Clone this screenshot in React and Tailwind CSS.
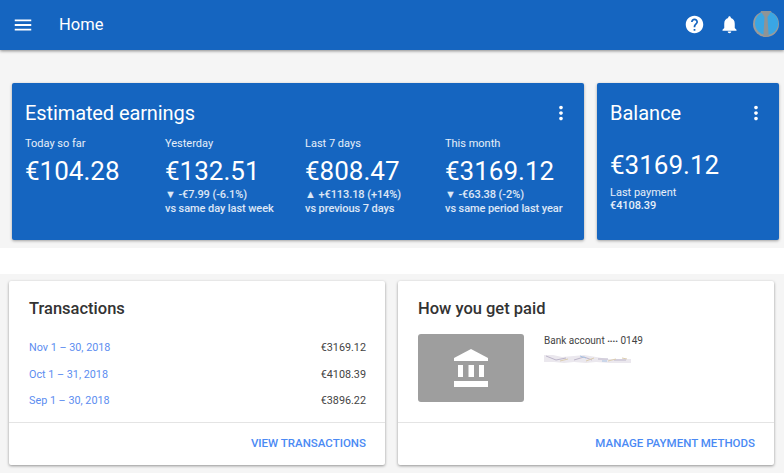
const stats = [
  { label: "Today so far", value: "€104.28" },
  { label: "Yesterday", value: "€132.51", change: "▼ -€7.99 (-6.1%)", note: "vs same day last week" },
  { label: "Last 7 days", value: "€808.47", change: "▲ +€113.18 (+14%)", note: "vs previous 7 days" },
  { label: "This month", value: "€3169.12", change: "▼ -€63.38 (-2%)", note: "vs same period last year" },
];

const transactions = [
  { period: "Nov 1 – 30, 2018", amount: "€3169.12" },
  { period: "Oct 1 – 31, 2018", amount: "€4108.39" },
  { period: "Sep 1 – 30, 2018", amount: "€3896.22" },
];

function MenuIcon() {
  return (
    <svg width="22" height="22" viewBox="0 0 24 24" fill="#fff">
      <path d="M3 18h18v-2H3v2zm0-5h18v-2H3v2zm0-7v2h18V6H3z" />
    </svg>
  );
}

function HelpIcon() {
  return (
    <svg width="21" height="21" viewBox="0 0 24 24" fill="#fff">
      <path d="M12 2C6.48 2 2 6.48 2 12s4.48 10 10 10 10-4.48 10-10S17.52 2 12 2zm1 17h-2v-2h2v2zm2.07-7.75l-.9.92C13.45 12.9 13 13.5 13 15h-2v-.5c0-1.1.45-2.1 1.17-2.83l1.24-1.26c.37-.36.59-.86.59-1.41 0-1.1-.9-2-2-2s-2 .9-2 2H8c0-2.21 1.79-4 4-4s4 1.79 4 4c0 .88-.36 1.68-.93 2.25z" />
    </svg>
  );
}

function BellIcon() {
  return (
    <svg width="21" height="21" viewBox="0 0 24 24" fill="#fff">
      <path d="M12 22c1.1 0 2-.9 2-2h-4c0 1.1.89 2 2 2zm6-6v-5c0-3.07-1.64-5.64-4.5-6.32V4c0-.83-.67-1.5-1.5-1.5s-1.5.67-1.5 1.5v.68C7.63 5.36 6 7.92 6 11v5l-2 2v1h16v-1l-2-2z" />
    </svg>
  );
}

function MoreIcon() {
  return (
    <svg width="22" height="22" viewBox="0 0 24 24" fill="#fff">
      <path d="M12 8c1.1 0 2-.9 2-2s-.9-2-2-2-2 .9-2 2 .9 2 2 2zm0 2c-1.1 0-2 .9-2 2s.9 2 2 2 2-.9 2-2-.9-2-2-2zm0 6c-1.1 0-2 .9-2 2s.9 2 2 2 2-.9 2-2-.9-2-2-2z" />
    </svg>
  );
}

function Avatar() {
  return (
    <svg width="26" height="26" viewBox="0 0 26 26">
      <circle cx="13" cy="13" r="13" fill="#9a9a9a" />
      <circle cx="13.6" cy="12.2" r="11.6" fill="#3aa6e4" />
      <path d="M7.5 0h11l-4 6 1.2 19.5h-5.4L11.5 6z" fill="#8f9496" />
    </svg>
  );
}

function BankIcon() {
  return (
    <svg width="34" height="38" viewBox="0 0 34 38" fill="#fff">
      <path d="M17 0L0 9v3h34V9z" />
      <rect x="4" y="16" width="5" height="12" />
      <rect x="14.5" y="16" width="5.5" height="12" />
      <rect x="25" y="16" width="5" height="12" />
      <rect x="0" y="32" width="34" height="6" />
    </svg>
  );
}

function Smear() {
  return (
    <svg width="87" height="10" viewBox="0 0 87 10" className="mt-[5px]">
      <path d="M0 1h9l9 2 12-1 10-1 12 2 12 2 23 0v4H66l-14-1-10 1-12-1-10 1-10-1H0z" fill="#ebe8ee" />
      <path d="M2 2l10 4 10-2M30 6l10-3 8 3M54 5h10M70 6h12" stroke="#bdb6ca" strokeWidth="1" fill="none" />
      <path d="M16 7l8-2M42 7l8-3M64 7l8-2M78 4l5 1" stroke="#dccdb0" strokeWidth="1" fill="none" />
      <path d="M36 2l6 2M58 7h5" stroke="#a9c4e4" strokeWidth="1" fill="none" />
    </svg>
  );
}

function EarningsCard() {
  return (
    <div className="w-[572px] h-[157px] rounded-[2px] bg-[#1565c0] text-white pl-[13px] pt-[17px] shadow-[0_1px_3px_rgba(0,0,0,0.35)]">
      <div className="flex items-center justify-between pr-[12px] h-[26px]">
        <h2 className="text-[20px] leading-[26px] tracking-[-0.1px]">Estimated earnings</h2>
        <MoreIcon />
      </div>
      <div className="flex mt-[10px]">
        {stats.map((s) => (
          <div key={s.label} className="w-[140px] shrink-0">
            <div className="text-[11px] leading-[16px] text-white/90">{s.label}</div>
            <div className="text-[26px] leading-[36px] mt-[1px]">{s.value}</div>
            {s.change && (
              <div className="text-[11px] leading-[14px] font-medium tracking-[-0.08px] -mt-[1px] text-white/85">
                <div>{s.change}</div>
                <div>{s.note}</div>
              </div>
            )}
          </div>
        ))}
      </div>
    </div>
  );
}

function BalanceCard() {
  return (
    <div className="w-[182px] h-[157px] rounded-[2px] bg-[#1565c0] text-white pl-[13px] pt-[17px] shadow-[0_1px_3px_rgba(0,0,0,0.35)]">
      <div className="flex items-center justify-between pr-[12px] h-[26px]">
        <h2 className="text-[20px] leading-[26px]">Balance</h2>
        <MoreIcon />
      </div>
      <div className="text-[26px] leading-[36px] mt-[21px]">€3169.12</div>
      <div className="text-[11px] leading-[14px] mt-[3px] text-white/90">Last payment</div>
      <div className="text-[11px] leading-[13px] font-medium tracking-[-0.08px] -mt-[1px] text-white/90">€4108.39</div>
    </div>
  );
}

function WhiteCard({ title, action, children }) {
  return (
    <div className="w-[376px] h-[184px] flex flex-col rounded-[2px] bg-white shadow-[0_1px_3px_rgba(0,0,0,0.4)]">
      <div className="flex-1 px-5 pt-[17px]">
        <h2 className="text-[16.5px] leading-[22px] font-medium text-[#333]">{title}</h2>
        {children}
      </div>
      <div className="h-[43px] border-t border-[#e4e4e4] flex items-center justify-end pr-[19px]">
        <span className="text-[11.5px] font-medium text-[#4b8af4]">{action}</span>
      </div>
    </div>
  );
}

export default function App() {
  return (
    <div className="w-[784px] h-[473px] overflow-hidden bg-[#f5f5f5] font-['Roboto',sans-serif]">
      <header className="h-[50px] bg-[#1565c0] flex items-center text-white shadow-[0_1px_3px_rgba(0,0,0,0.45)] relative">
        <span className="ml-[12px] -mt-[1px]"><MenuIcon /></span>
        <span className="ml-[25px] mt-[1px] text-[16.5px]">Home</span>
        <div className="ml-auto flex items-center pr-[5px] -mt-[2px]">
          <HelpIcon />
          <span className="ml-[14px]"><BellIcon /></span>
          <span className="ml-[13px]"><Avatar /></span>
        </div>
      </header>

      <section className="h-[198px] flex gap-[13px] pl-[12px] pt-[33px]">
        <EarningsCard />
        <BalanceCard />
      </section>

      <div className="h-[26px] bg-white" />

      <section className="flex gap-[13px] pl-[9px] pt-[7px]">
        <WhiteCard title="Transactions" action="VIEW TRANSACTIONS">
          <div className="mt-[20px] flex flex-col gap-[10.5px]">
            {transactions.map((t) => (
              <div key={t.period} className="flex justify-between text-[10.8px] leading-[16px]">
                <span className="text-[#5c8df0]">{t.period}</span>
                <span className="text-[#444] mr-[-1px]">{t.amount}</span>
              </div>
            ))}
          </div>
        </WhiteCard>
        <WhiteCard title="How you get paid" action="MANAGE PAYMENT METHODS">
          <div className="flex mt-[14px]">
            <div className="w-[106px] h-[68px] rounded-[3px] bg-[#9e9e9e] flex items-center justify-center">
              <BankIcon />
            </div>
            <div className="ml-5">
              <div className="text-[10px] leading-[14px] text-[#444]">
                Bank account <span className="text-[8px]">••••</span> 0149
              </div>
              <Smear />
            </div>
          </div>
        </WhiteCard>
      </section>
    </div>
  );
}
